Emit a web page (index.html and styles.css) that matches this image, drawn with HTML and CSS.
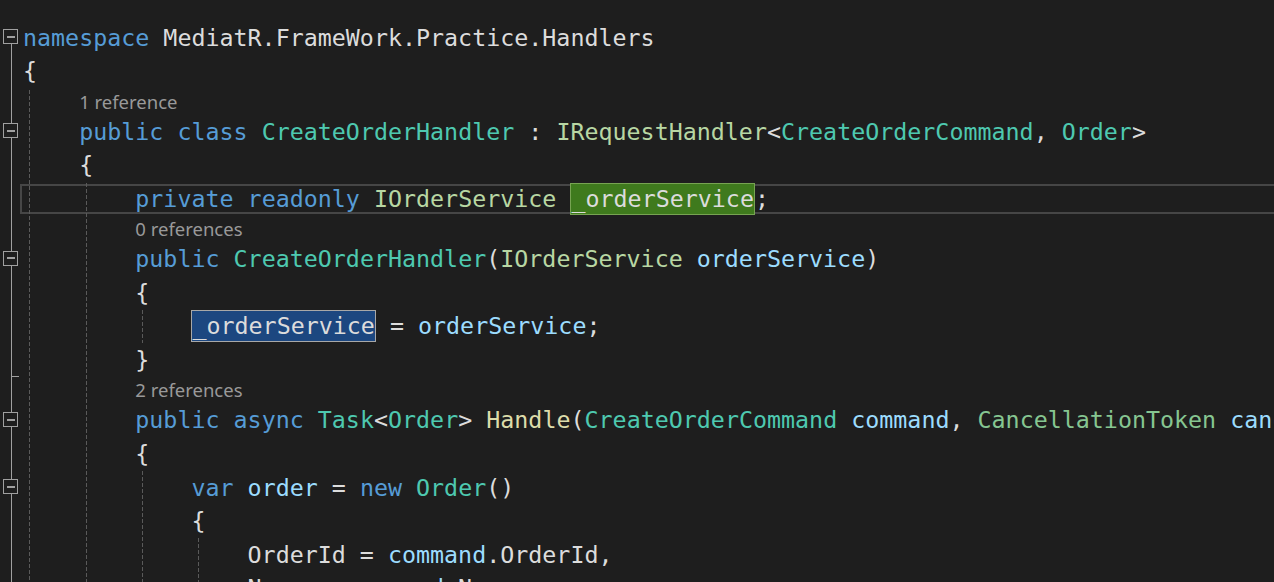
FILE: index.html
```html
<!DOCTYPE html>
<html lang="en">
<head>
    <meta charset="UTF-8">
    <title>CreateOrderHandler.cs</title>
    <link rel="stylesheet" href="styles.css">
</head>
<body>
    <div class="editor">
        <div class="guide" style="left: 29px; top: 90px; bottom: 0;"></div>
        <div class="guide" style="left: 86px; top: 183px; bottom: 0;"></div>
        <div class="guide" style="left: 142px; top: 310px; height: 33px;"></div>
        <div class="guide" style="left: 142px; top: 471px; bottom: 0;"></div>
        <div class="guide" style="left: 198px; top: 538px; bottom: 0;"></div>

        <div class="line"><div class="g first fold"></div><span class="code"><span class="k">namespace</span> MediatR.FrameWork.Practice.Handlers</span></div>
        <div class="line"><div class="g"></div><span class="code">{</span></div>
        <div class="lens"><div class="g"></div><span class="ind">    </span><span class="lens-text">1 reference</span></div>
        <div class="line"><div class="g fold"></div><span class="code">    <span class="k">public</span> <span class="k">class</span> <span class="t">CreateOrderHandler</span> : <span class="i">IRequestHandler</span>&lt;<span class="t">CreateOrderCommand</span>, <span class="t">Order</span>&gt;</span></div>
        <div class="line"><div class="g"></div><span class="code">    {</span></div>
        <div class="line current"><div class="g"></div><span class="code">        <span class="k">private</span> <span class="k">readonly</span> <span class="i">IOrderService</span> <span class="hl-ref">_orderService</span>;</span></div>
        <div class="lens"><div class="g"></div><span class="ind">        </span><span class="lens-text">0 references</span></div>
        <div class="line"><div class="g fold"></div><span class="code">        <span class="k">public</span> <span class="t">CreateOrderHandler</span>(<span class="i">IOrderService</span> <span class="p">orderService</span>)</span></div>
        <div class="line"><div class="g"></div><span class="code">        {</span></div>
        <div class="line"><div class="g"></div><span class="code">            <span class="hl-sel">_orderService</span> = <span class="p">orderService</span>;</span></div>
        <div class="line"><div class="g end"></div><span class="code">        }</span></div>
        <div class="lens"><div class="g"></div><span class="ind">        </span><span class="lens-text">2 references</span></div>
        <div class="line"><div class="g fold"></div><span class="code">        <span class="k">public</span> <span class="k">async</span> <span class="t">Task</span>&lt;<span class="t">Order</span>&gt; <span class="m">Handle</span>(<span class="t">CreateOrderCommand</span> <span class="p">command</span>, <span class="s">CancellationToken</span> <span class="p">cancellationToken</span>)</span></div>
        <div class="line"><div class="g"></div><span class="code">        {</span></div>
        <div class="line"><div class="g fold"></div><span class="code">            <span class="k">var</span> <span class="p">order</span> = <span class="k">new</span> <span class="t">Order</span>()</span></div>
        <div class="line"><div class="g"></div><span class="code">            {</span></div>
        <div class="line"><div class="g"></div><span class="code">                OrderId = <span class="p">command</span>.OrderId,</span></div>
        <div class="line"><div class="g"></div><span class="code">                Name = <span class="p">command</span>.Name,</span></div>
    </div>
</body>
</html>
```

FILE: styles.css
```css
body {
    margin: 0;
    background: #1e1e1e;
    overflow: hidden;
}

.editor {
    position: relative;
    height: 582px;
    padding-top: 20.6px;
    box-sizing: border-box;
    overflow: hidden;
    color: #dcdcdc;
}

.line {
    position: relative;
    display: flex;
    height: 33.6px;
    align-items: center;
}

.lens {
    display: flex;
    height: 26.8px;
    align-items: center;
}

.code,
.ind {
    font-family: "DejaVu Sans Mono", "Liberation Mono", monospace;
    font-size: 23.32px;
    line-height: 33.6px;
    white-space: pre;
}

.lens-text {
    font-family: "Noto Sans", "Open Sans", sans-serif;
    font-size: 18.5px;
    color: #999999;
}

/* outlining margin */
.g {
    position: relative;
    flex: none;
    align-self: stretch;
    width: 23px;
}

.g::before {
    content: "";
    position: absolute;
    left: 11px;
    top: 0;
    bottom: 0;
    border-left: 1px solid #a0a0a0;
}

.g.first::before {
    top: 50%;
}

.g.fold::after {
    content: "";
    position: absolute;
    left: 3px;
    top: 50%;
    width: 13px;
    height: 13px;
    margin-top: -8px;
    border: 1px solid #a0a0a0;
    background: #1e1e1e linear-gradient(#a0a0a0, #a0a0a0) center / 8px 2px no-repeat;
}

.g.end::after {
    content: "";
    position: absolute;
    left: 11px;
    bottom: 0;
    width: 8px;
    border-top: 1px solid #a0a0a0;
}

.guide {
    position: absolute;
    width: 1px;
    background: repeating-linear-gradient(#5a5a5a 0 4px, transparent 4px 6px);
}

/* current line frame sits under the text */
.current::after {
    content: "";
    position: absolute;
    z-index: -1;
    left: 20px;
    right: -10px;
    top: 2px;
    bottom: 1px;
    border: 2px solid #464646;
}

.hl-ref,
.hl-sel {
    display: inline-block;
    line-height: 30px;
}

.hl-ref {
    background: #3f7a1d;
    border: 1px solid #77a352;
}

.hl-sel {
    background: #1c4780;
    border: 1px solid #a8a8a8;
}

.k { color: #569cd6; }
.t { color: #4ec9b0; }
.i { color: #b8d7a3; }
.s { color: #86c691; }
.m { color: #dcdcaa; }
.p { color: #9cdcfe; }
```
